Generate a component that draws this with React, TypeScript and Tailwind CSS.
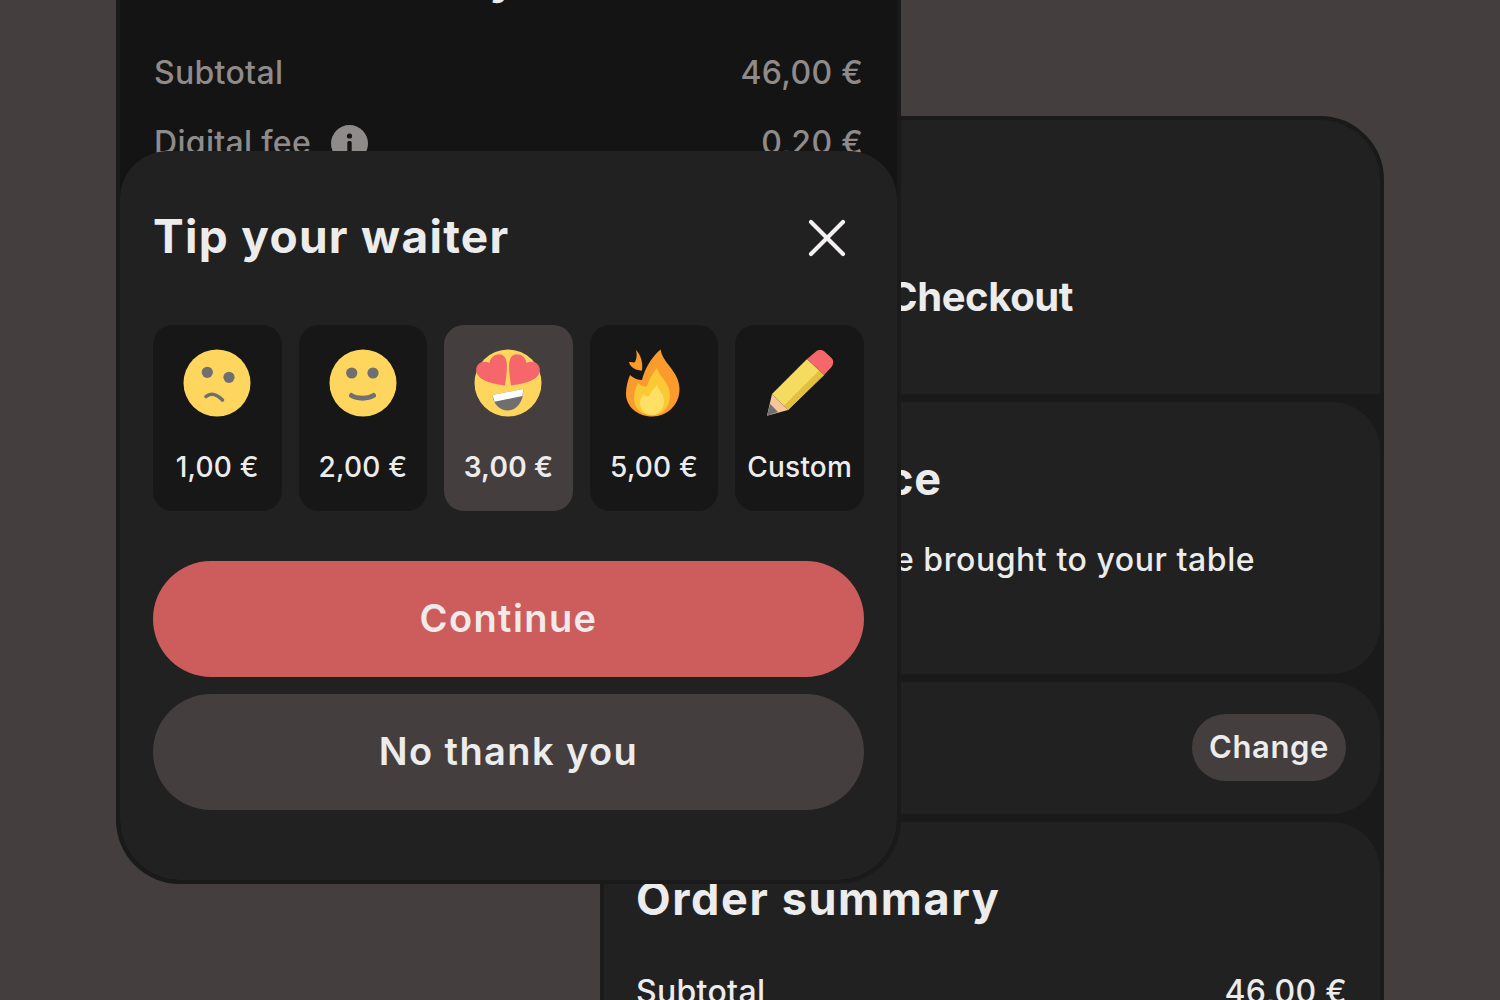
import { X } from "lucide-react"

const tips = [
  { id: "sad", label: "1,00 €" },
  { id: "smile", label: "2,00 €" },
  { id: "love", label: "3,00 €", active: true },
  { id: "fire", label: "5,00 €" },
  { id: "pencil", label: "Custom" },
]

function Emoji({ id }: { id: string }) {
  if (id === "sad") {
    return (
      <svg width="68" height="68" viewBox="0 0 68 68">
        <circle cx="34" cy="34" r="33.5" fill="#fed65e" />
        <circle cx="24.3" cy="23.3" r="5.6" fill="#6f6f6f" />
        <circle cx="46" cy="28.3" r="5.6" fill="#6f6f6f" />
        <path d="M23 47.5C27 44 33 44.5 39.5 51" fill="none" stroke="#6f6f6f" strokeWidth="3.6" strokeLinecap="round" />
      </svg>
    )
  }
  if (id === "smile") {
    return (
      <svg width="68" height="68" viewBox="0 0 68 68">
        <circle cx="34" cy="34" r="33.5" fill="#fed65e" />
        <circle cx="22.7" cy="24" r="5.6" fill="#6f6f6f" />
        <circle cx="44" cy="24" r="5.6" fill="#6f6f6f" />
        <path d="M22.5 46.5C28 50 39 50 44.5 46.5" fill="none" stroke="#6f6f6f" strokeWidth="5" strokeLinecap="round" />
      </svg>
    )
  }
  if (id === "love") {
    return (
      <svg width="68" height="68" viewBox="0 0 68 68">
        <circle cx="34" cy="34" r="33.5" fill="#fed65e" />
        <path d="M18.5 46L49.2 40C50 52 43 61.5 34 61.5C25 61.5 19 54 18.5 46Z" fill="#6f6f6f" />
        <path d="M18.5 46L49.2 40L48.5 47L20.5 52.7Z" fill="#fff" />
        <path d="M31 36.5C20 35 2.5 32 2.2 21C2 14.5 9 10.5 15.5 14C16.5 7 24 3.5 28.5 6C34.5 9.5 33.5 20 31 36.5Z" fill="#f5676a" />
        <path d="M37 36.5C48 35 65.5 32 65.8 21C66 14.5 59 10.5 52.5 14C51.5 7 44 3.5 39.5 6C33.5 9.5 34.5 20 37 36.5Z" fill="#f5676a" />
      </svg>
    )
  }
  if (id === "fire") {
    return (
      <svg width="68" height="68" viewBox="0 0 68 68">
        <path d="M40.7 0.5C42 14 59.5 22 59.5 40C59.5 56 47 67.5 32.5 67.5C17 67.5 6 57 6 45C6 37 8 31 10 26C13 29 18 31 22 31C24 22 31 8 40.7 0.5Z" fill="#fb9b2d" />
        <path d="M37 19C39 28 50 33 50 47C50 58 42 66.5 32 66.5C21 66.5 14 58 14 50C14 43 16 38 18 34C21 37 24 38 27 37C29 30 33 24 37 19Z" fill="#fdc836" />
        <path d="M37 36C38 41 44 44 44 52C44 60 38 66 32 66C25 66 20 60 20 54C20 50 22 47 23 45C25 47 27 48 29 47C31 43 34 39 37 36Z" fill="#ffe064" />
        <path d="M16 1C21 6 23 14 22 21.5C17 21.5 10 19 9 13C12 13 14 14 15 13C17 9 17 5 16 1Z" fill="#fb9b2d" />
      </svg>
    )
  }
  return (
    <svg width="68" height="68" viewBox="0 0 68 68">
      <path d="M1 66.7L6 45L22 61Z" fill="#f8c49b" />
      <path d="M1 66.7L4.2 55L12 63Z" fill="#6f6f6f" />
      <path d="M6 45L41 10L58 26L22 61Z" fill="#f5db5f" />
      <path d="M18 56.5L53 21.5L58 26L22 61Z" fill="#e3bf3e" />
      <path d="M41 10L50 2.5C52.5 0.5 56.5 0.5 59 3L65.5 9C68 11.5 67.5 15.5 65.5 18L58 26Z" fill="#f5676a" />
    </svg>
  )
}

function SummaryRow({ label, value, info }: { label: string; value: string; info?: boolean }) {
  return (
    <div className="flex h-[70px] items-center justify-between text-[32px] font-medium leading-none tracking-[0.3px] text-[#8f8b8b]">
      <div className="flex items-center gap-5">
        <span>{label}</span>
        {info && (
          <svg width="37" height="37" viewBox="0 0 37 37">
            <circle cx="18.5" cy="18.5" r="18.5" fill="#8f8b8b" />
            <circle cx="18.5" cy="11" r="2.6" fill="#141414" />
            <rect x="16.3" y="16" width="4.4" height="12" rx="1.5" fill="#141414" />
          </svg>
        )}
      </div>
      <span>{value}</span>
    </div>
  )
}

export default function App() {
  return (
    <div className="relative h-[1000px] w-[1500px] overflow-hidden bg-[#443e3e] font-['Inter',sans-serif] text-[#ececec]">
      {/* Checkout screen behind the sheet */}
      <div className="ml-[600px] mt-[116px] flex w-[784px] flex-col gap-2 rounded-t-[64px] border-4 border-[#1a1a1a] bg-[#1a1a1a]">
        <div className="h-[274px] rounded-t-[60px] bg-[#212121] pl-[284px] pt-[153px]">
          <h1 className="text-[40px] font-bold leading-[48px] tracking-[-0.4px]">Checkout</h1>
        </div>
        <div className="flex h-[272px] flex-col rounded-[48px] bg-[#212121] pl-[33px] pt-[54px]">
          <h2 className="text-[45px] font-bold leading-none tracking-[0.8px]">Table service</h2>
          <p className="mt-[43px] text-[32px] font-medium leading-none tracking-[0.55px]">Your order will be brought to your table</p>
        </div>
        <div className="flex h-[132px] items-center justify-end rounded-[48px] bg-[#212121] pb-[2px] pr-[34px]">
          <button className="flex h-[67px] w-[154px] items-center justify-center rounded-full bg-[#443e3e] pb-[2px] text-[31px] font-semibold leading-none tracking-[0.6px]">
            Change
          </button>
        </div>
        <div className="h-[300px] rounded-t-[48px] bg-[#212121] pl-[32px] pr-[33px] pt-[54px]">
          <h2 className="text-[45px] font-bold leading-none tracking-[1.6px]">Order summary</h2>
          <div className="mt-[55px] flex items-center justify-between text-[32px] font-medium leading-none tracking-[0.3px]">
            <span>Subtotal</span>
            <span>46,00 €</span>
          </div>
        </div>
      </div>

      {/* Left phone with the tip sheet on top */}
      <div className="absolute left-[116px] top-[-100px] h-[984px] w-[785px] overflow-hidden rounded-b-[64px] border-x-4 border-b-4 border-[#1a1a1a] bg-[#141414]">
        <div className="px-[34px] pt-[55px]">
          <h2 className="text-[45px] font-bold leading-none tracking-[1.6px]">Order summary</h2>
          <div className="mt-[38px]">
            <SummaryRow label="Subtotal" value="46,00 €" />
            <SummaryRow label="Digital fee" value="0,20 €" info />
          </div>
        </div>

        <div className="absolute inset-x-0 bottom-0 flex h-[729px] flex-col rounded-b-[60px] rounded-t-[48px] bg-[#212121] px-[33px]">
          <div className="mt-[58px] flex h-[58px] items-center justify-between">
            <h2 className="mb-[4px] text-[46px] font-bold leading-none tracking-[1.3px]">Tip your waiter</h2>
            <X className="mr-[5px]" size={64} strokeWidth={1.55} color="#f4f0f0" />
          </div>
          <div className="mt-[58px] grid grid-cols-5 gap-[17px]">
            {tips.map((t) => (
              <div
                key={t.id}
                className={`flex h-[186px] flex-col items-center rounded-[20px] pt-[24px] ${t.active ? "bg-[#443e3e]" : "bg-[#171717]"}`}
              >
                <Emoji id={t.id} />
                <span className={`mt-[36px] text-[28px] leading-none tracking-[0.2px] ${t.active ? "font-semibold" : "font-medium"}`}>{t.label}</span>
              </div>
            ))}
          </div>
          <button className="mt-[50px] flex h-[116px] w-full items-center justify-center rounded-full bg-[#cd5c5c] pb-[2px] text-[38px] font-semibold leading-none tracking-[1.4px] text-[#f0eaea]">
            Continue
          </button>
          <button className="mt-[17px] flex h-[116px] w-full items-center justify-center rounded-full bg-[#443e3e] pb-[2px] text-[38px] font-semibold leading-none tracking-[1.4px]">
            No thank you
          </button>
        </div>
      </div>
    </div>
  )
}
